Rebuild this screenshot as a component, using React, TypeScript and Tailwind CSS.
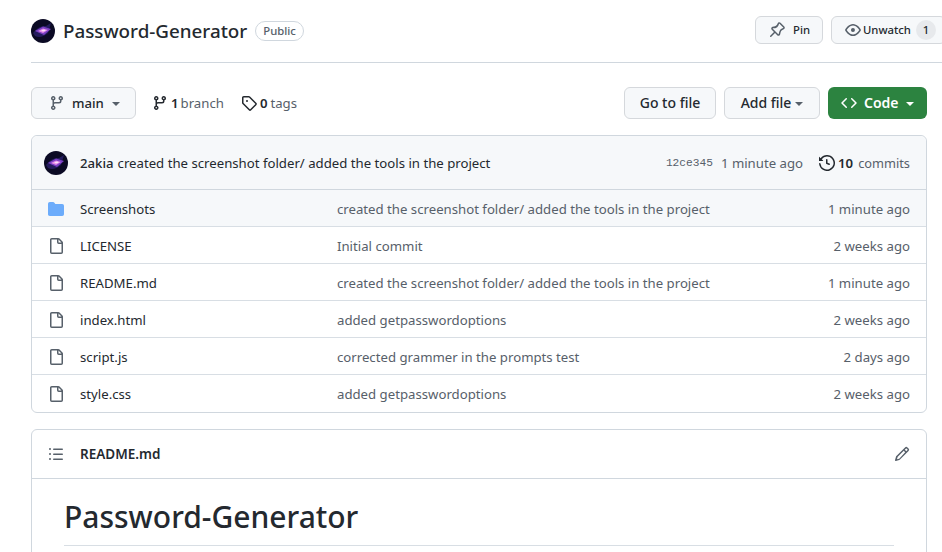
const font = 'font-["Noto_Sans","Open_Sans",sans-serif]'

function Octicon({ d, className, mirror }: { d: string; className?: string; mirror?: boolean }) {
  return (
    <svg viewBox="0 0 16 16" width="16" height="16" fill="currentColor" className={`shrink-0 ${className}`}>
      <path d={d} transform={mirror ? 'matrix(-1 0 0 1 16 0)' : undefined} />
    </svg>
  )
}

const icons = {
  branch: 'M9.5 3.25a2.25 2.25 0 1 1 3 2.122V6A2.5 2.5 0 0 1 10 8.5H6a1 1 0 0 0-1 1v1.128a2.251 2.251 0 1 1-1.5 0V5.372a2.25 2.25 0 1 1 1.5 0v1.836A2.493 2.493 0 0 1 6 7h4a1 1 0 0 0 1-1v-.628A2.25 2.25 0 0 1 9.5 3.25Zm-6 0a.75.75 0 1 0 1.5 0 .75.75 0 0 0-1.5 0Zm8.25-.75a.75.75 0 1 0 0 1.5.75.75 0 0 0 0-1.5ZM4.25 12a.75.75 0 1 0 0 1.5.75.75 0 0 0 0-1.5Z',
  tag: 'M1 7.775V2.75C1 1.784 1.784 1 2.75 1h5.025c.464 0 .91.184 1.238.513l6.25 6.25a1.75 1.75 0 0 1 0 2.474l-5.026 5.026a1.75 1.75 0 0 1-2.474 0l-6.25-6.25A1.752 1.752 0 0 1 1 7.775Zm1.5 0c0 .066.026.13.073.177l6.25 6.25a.25.25 0 0 0 .354 0l5.025-5.025a.25.25 0 0 0 0-.354l-6.25-6.25a.25.25 0 0 0-.177-.073H2.75a.25.25 0 0 0-.25.25ZM6 5a1 1 0 1 1 0 2 1 1 0 0 1 0-2Z',
  pin: 'M4.456.734a1.75 1.75 0 0 1 2.826.504l.613 1.327a3.081 3.081 0 0 0 2.084 1.707l2.454.584c1.332.317 1.8 1.972.832 2.94L11.06 10l3.72 3.72a.748.748 0 0 1-.332 1.265.75.75 0 0 1-.729-.205L10 11.06l-2.204 2.205c-.968.968-2.623.5-2.94-.832l-.584-2.454a3.081 3.081 0 0 0-1.707-2.084l-1.327-.613a1.75 1.75 0 0 1-.504-2.826L4.456.734ZM5.92 1.866a.25.25 0 0 0-.404-.072L1.794 5.516a.25.25 0 0 0 .072.404l1.328.613A4.582 4.582 0 0 1 5.73 9.63l.584 2.454a.25.25 0 0 0 .42.12l5.47-5.47a.25.25 0 0 0-.12-.42L9.63 6.13a4.581 4.581 0 0 1-3.098-2.537L5.92 1.866Z',
  eye: 'M8 2c1.981 0 3.671.992 4.933 2.078 1.27 1.091 2.187 2.345 2.637 3.023a1.62 1.62 0 0 1 0 1.798c-.45.678-1.367 1.932-2.637 3.023C11.67 13.008 9.981 14 8 14c-1.981 0-3.671-.992-4.933-2.078C1.797 10.83.88 9.576.43 8.898a1.62 1.62 0 0 1 0-1.798c.45-.677 1.367-1.931 2.637-3.022C4.33 2.992 6.019 2 8 2ZM1.679 7.932a.12.12 0 0 0 0 .136c.411.622 1.241 1.75 2.366 2.717C5.176 11.758 6.527 12.5 8 12.5c1.473 0 2.825-.742 3.955-1.715 1.124-.967 1.954-2.096 2.366-2.717a.12.12 0 0 0 0-.136c-.412-.621-1.242-1.75-2.366-2.717C10.824 4.242 9.473 3.5 8 3.5c-1.473 0-2.825.742-3.955 1.715-1.124.967-1.954 2.096-2.366 2.717ZM8 10a2 2 0 1 1-.001-3.999A2 2 0 0 1 8 10Z',
  code: 'm11.28 3.22 4.25 4.25a.75.75 0 0 1 0 1.06l-4.25 4.25a.749.749 0 0 1-1.275-.326.749.749 0 0 1 .215-.734L13.94 8l-3.72-3.72a.749.749 0 0 1 .326-1.275.749.749 0 0 1 .734.215Zm-6.56 0a.751.751 0 0 1 1.042.018.751.751 0 0 1 .018 1.042L2.06 8l3.72 3.72a.749.749 0 0 1-.326 1.275.749.749 0 0 1-.734-.215L.47 8.53a.75.75 0 0 1 0-1.06Z',
  history: 'm.427 1.927 1.215 1.215a8.002 8.002 0 1 1-1.6 5.685.75.75 0 1 1 1.493-.154 6.5 6.5 0 1 0 1.18-4.458l1.358 1.358A.25.25 0 0 1 3.896 6H.25A.25.25 0 0 1 0 5.75V2.104a.25.25 0 0 1 .427-.177ZM7.75 4a.75.75 0 0 1 .75.75v2.992l2.028.812a.75.75 0 0 1-.557 1.392l-2.5-1A.751.751 0 0 1 7 8.25v-3.5A.75.75 0 0 1 7.75 4Z',
  file: 'M2 1.75C2 .784 2.784 0 3.75 0h6.586c.464 0 .909.184 1.237.513l2.914 2.914c.329.328.513.773.513 1.237v9.586A1.75 1.75 0 0 1 13.25 16h-9.5A1.75 1.75 0 0 1 2 14.25Zm1.75-.25a.25.25 0 0 0-.25.25v12.5c0 .138.112.25.25.25h9.5a.25.25 0 0 0 .25-.25V6h-2.75A1.75 1.75 0 0 1 9 4.25V1.5Zm6.75.062V4.25c0 .138.112.25.25.25h2.688l-.011-.013-2.914-2.914-.013-.011Z',
  folder: 'M1.75 1A1.75 1.75 0 0 0 0 2.75v10.5C0 14.216.784 15 1.75 15h12.5A1.75 1.75 0 0 0 16 13.25v-8.5A1.75 1.75 0 0 0 14.25 3H7.5a.25.25 0 0 1-.2-.1l-.9-1.2C6.07 1.26 5.55 1 5 1H1.75Z',
  list: 'M5.75 2.5h8.5a.75.75 0 0 1 0 1.5h-8.5a.75.75 0 0 1 0-1.5Zm0 5h8.5a.75.75 0 0 1 0 1.5h-8.5a.75.75 0 0 1 0-1.5Zm0 5h8.5a.75.75 0 0 1 0 1.5h-8.5a.75.75 0 0 1 0-1.5ZM2 14a1 1 0 1 1 0-2 1 1 0 0 1 0 2Zm1-6a1 1 0 1 1-2 0 1 1 0 0 1 2 0ZM2 4a1 1 0 1 1 0-2 1 1 0 0 1 0 2Z',
  pencil: 'M11.013 1.427a1.75 1.75 0 0 1 2.474 0l1.086 1.086a1.75 1.75 0 0 1 0 2.474l-8.61 8.61c-.21.21-.47.364-.756.445l-3.251.93a.75.75 0 0 1-.927-.928l.929-3.25c.081-.286.235-.547.445-.758l8.61-8.61Zm.176 4.823L9.75 4.81l-6 6a.749.749 0 0 0-.19.324l-.62 2.17 2.17-.62a.749.749 0 0 0 .324-.19Zm1.238-3.763a.25.25 0 0 0-.354 0L10.811 3.75l1.439 1.44 1.263-1.263a.25.25 0 0 0 0-.354Z',
}

function Avatar({ size }: { size: number }) {
  return (
    <svg viewBox="0 0 24 24" width={size} height={size} className="shrink-0">
      <circle cx="12" cy="12" r="12" fill="#0b0a24" />
      <path d="M2 14 Q8 6 15 7 L20 4 L17 14 Q10 20 4 17Z" fill="#2a1f6b" opacity="0.8" />
      <path d="M4 12 L12 7.5 L20 10 L13 16Z" fill="#7b3fc4" />
      <path d="M7 12 L12 9.5 L17 11 L12 14Z" fill="#e58ce8" />
      <path d="M10 11.5 L13 10.5 L15 11.5 L12 12.5Z" fill="#fbe3fb" />
    </svg>
  )
}

function Caret({ className }: { className?: string }) {
  return <span className={`inline-block h-0 w-0 border-x-[4px] border-t-[4px] border-x-transparent ${className}`} />
}

const btn = 'flex items-center rounded-md border border-[#d5d8dc] bg-[#f6f8fa] text-[#24292f] font-medium'

const rows = [
  { name: 'Screenshots', folder: true, msg: 'created the screenshot folder/ added the tools in the project', age: '1 minute ago' },
  { name: 'LICENSE', msg: 'Initial commit', age: '2 weeks ago' },
  { name: 'README.md', msg: 'created the screenshot folder/ added the tools in the project', age: '1 minute ago' },
  { name: 'index.html', msg: 'added getpasswordoptions', age: '2 weeks ago' },
  { name: 'script.js', msg: 'corrected grammer in the prompts test', age: '2 days ago' },
  { name: 'style.css', msg: 'added getpasswordoptions', age: '2 weeks ago' },
]

export default function App() {
  return (
    <div className={`h-[552px] w-[942px] overflow-hidden bg-white pl-[31px] text-[13.2px] leading-[20px] text-[#24292f] ${font}`}>
      {/* repo title */}
      <div className="flex h-[63px] w-[915px] items-start border-b border-[#d0d7de] pt-[16px]">
        <div className="flex h-[30px] items-center">
          <Avatar size={24} />
          <span className="ml-2 text-[18.8px] font-medium leading-[30px] text-[#24292f]">Password-Generator</span>
          <span className="ml-2 flex h-[20px] items-center rounded-full border border-[#d0d7de] px-[7px] text-[11.3px] font-medium text-[#57606a]">Public</span>
        </div>
        <div className="ml-auto flex gap-2">
          <div className={`${btn} h-[28px] w-[68px] pl-[13px] text-[11.3px]`}>
            <Octicon d={icons.pin} mirror className="text-[#57606a]" />
            <span className="ml-2">Pin</span>
          </div>
          <div className={`${btn} h-[28px] w-[115px] pl-[13px] text-[11.3px]`}>
            <Octicon d={icons.eye} className="text-[#57606a]" />
            <span className="ml-[2px]">Unwatch</span>
            <span className="ml-[5px] flex h-[20px] w-[20px] items-center justify-center rounded-full bg-[#e7e9ec] text-[11.3px] text-[#24292f]">1</span>
          </div>
        </div>
      </div>

      {/* branch toolbar */}
      <div className="mt-[24px] flex h-[32px] w-[896px] items-center">
        <div className={`${btn} h-[32px] w-[105px] pl-[17px] text-[13.2px]`}>
          <Octicon d={icons.branch} className="text-[#57606a]" />
          <span className="ml-[7px]">main</span>
          <Caret className="ml-[8px] mt-[2px] border-t-[#57606a]" />
        </div>
        <Octicon d={icons.branch} className="ml-[16px] text-[#24292f]" />
        <span className="ml-[3px] font-semibold">1</span>
        <span className="ml-[2px] text-[#57606a]">branch</span>
        <Octicon d={icons.tag} className="ml-[17px] text-[#24292f]" />
        <span className="ml-[3px] font-semibold">0</span>
        <span className="ml-[3px] text-[#57606a]">tags</span>
        <div className="ml-auto flex gap-2">
          <div className={`${btn} h-[32px] w-[92px] justify-center text-[14px]`}>Go to file</div>
          <div className={`${btn} h-[32px] w-[96px] justify-center text-[14px]`}>
            Add file
            <Caret className="ml-[4px] mt-[1px] border-t-[#57606a]" />
          </div>
          <div className="flex h-[32px] w-[99px] items-center rounded-md bg-[#2c8340] pl-[13px] text-[14px] font-semibold text-white">
            <Octicon d={icons.code} />
            <span className="ml-[7px]">Code</span>
            <Caret className="ml-[7px] mt-[1px] border-t-white" />
          </div>
        </div>
      </div>

      {/* file list */}
      <div className="mt-[16px] w-[896px] rounded-md border border-[#d0d7de]">
        <div className="flex h-[54px] items-center rounded-t-md border-b border-[#d0d7de] bg-[#f6f8fa] pl-[12px] pr-[16px]">
          <Avatar size={24} />
          <span className="ml-[12px] font-medium">2akia</span>
          <span className="ml-[4px]">created the screenshot folder/ added the tools in the project</span>
          <span className="ml-auto font-['Liberation_Mono',monospace] text-[11.2px] text-[#57606a]">12ce345</span>
          <span className="ml-[8px] text-[#57606a]">1 minute ago</span>
          <Octicon d={icons.history} className="ml-[16px] text-[#24292f]" />
          <span className="ml-[3px] font-semibold">10</span>
          <span className="ml-[5px] text-[12.8px] text-[#57606a]">commits</span>
        </div>
        {rows.map((row, i) => (
          <div
            key={row.name}
            className={`flex h-[37px] items-center px-[16px] ${i < rows.length - 1 ? 'border-b border-[#d8dee4] pt-[2px]' : ''} ${i === 0 ? 'bg-[#f6f8fa]' : ''}`}
          >
            {row.folder ? (
              <Octicon d={icons.folder} className="text-[#6cacfb]" />
            ) : (
              <Octicon d={icons.file} className="text-[#57606a]" />
            )}
            <span className="ml-[16px] w-[257px] shrink-0">{row.name}</span>
            <span className="text-[#57606a]">{row.msg}</span>
            <span className="ml-auto text-[#57606a]">{row.age}</span>
          </div>
        ))}
      </div>

      {/* readme */}
      <div className="mt-[16px] w-[896px] rounded-t-md border border-[#d0d7de] pb-[40px]">
        <div className="flex h-[49px] items-center border-b border-[#d0d7de] px-[16px]">
          <Octicon d={icons.list} className="text-[#57606a]" />
          <span className="ml-[16px] text-[13.5px] font-semibold">README.md</span>
          <Octicon d={icons.pencil} className="ml-auto text-[#57606a]" />
        </div>
        <div className="px-[32px] pt-[18px]">
          <h1 className="border-b border-[#d8dee4] pb-[8px] text-[30px] font-medium leading-[40px] text-[#24292f]">Password-Generator</h1>
        </div>
      </div>
    </div>
  )
}
